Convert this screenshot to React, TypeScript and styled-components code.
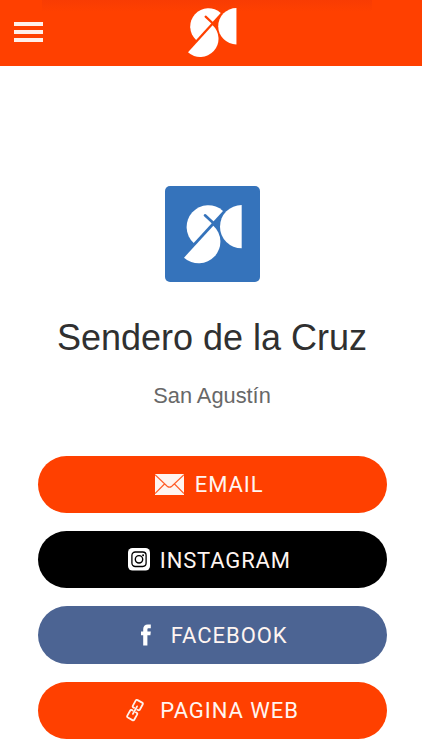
import React from "react";
import styled, { createGlobalStyle } from "styled-components";

const GlobalStyle = createGlobalStyle`
  * { box-sizing: border-box; }
  body { margin: 0; background: #fff; overflow: hidden; }
`;

const Page = styled.div`
  width: 422px;
  height: 750px;
  overflow: hidden;
  background: #fff;
  display: flex;
  flex-direction: column;
`;

const Header = styled.header`
  height: 66.4px;
  flex: none;
  display: grid;
  grid-template-columns: 188.4px 49px 1fr;
  align-items: start;
  background: linear-gradient(#f83c03, #ff4000 12px) 42px 0 / 330px 100% no-repeat #ff4000;
`;

const MenuButton = styled.button`
  margin: 22px 0 0 13.7px;
  padding: 0;
  width: 29px;
  height: 20px;
  border: 0;
  background: none;
  display: flex;
  flex-direction: column;
  justify-content: space-between;
`;

const MenuBar = styled.span`
  height: 3.7px;
  background: #fff0ea;
`;

const HeaderLogo = styled.div`
  padding-top: 8px;
  height: 60px;
`;

const Profile = styled.main`
  display: flex;
  flex-direction: column;
  align-items: center;
  padding-top: 119.6px;
`;

const Avatar = styled.div`
  width: 95.6px;
  height: 96px;
  margin-left: 3px;
  border-radius: 5px;
  background: #3573bb;
  padding: 19px 0 0 18.9px;
`;

const Title = styled.h1`
  margin: 34px 0 0 2px;
  font: 400 36px/44px "Liberation Sans", Arial, sans-serif;
  letter-spacing: 0;
  color: #303030;
  white-space: nowrap;
`;

const Subtitle = styled.p`
  margin: 23px 0 0 2px;
  font: 400 21.8px/26px "Liberation Sans", Arial, sans-serif;
  color: #686868;
  white-space: nowrap;
`;

const Links = styled.nav`
  margin: 46.7px 0 0 3px;
  width: 349.4px;
  display: flex;
  flex-direction: column;
  gap: 18.1px;
`;

const LinkButton = styled.a<{ $color: string; $inset: number }>`
  height: 57.3px;
  border-radius: 29px;
  background: ${(p) => p.$color};
  padding-left: ${(p) => p.$inset}px;
  display: flex;
  align-items: center;
  color: #fff;
`;

const IconSlot = styled.span<{ $width: number }>`
  width: ${(p) => p.$width}px;
  flex: none;
  display: flex;
  align-items: center;
`;

const Label = styled.span<{ $spacing: number }>`
  padding-top: 2px;
  font: 400 22px/26px Roboto, sans-serif;
  letter-spacing: ${(p) => p.$spacing}px;
  color: #fff5f1;
  white-space: nowrap;
`;

const Logo = ({ width, background }: { width: number; background: string }) => (
  <svg width={width} height={(width * 176) / 174} viewBox="70 75 174 176" display="block">
    <g fill="#fff">
      <path d="M187 93A65 65 0 1 0 99 189Z" />
      <path d="M158 137A65 65 0 1 1 70 233Z" />
      <path d="M243 75V205A65 65 0 0 1 243 75Z" />
    </g>
    <path d="M133 106L162 133" stroke={background} strokeWidth="8" strokeLinecap="round" />
  </svg>
);

const MailIcon = () => (
  <svg width="29" height="21" viewBox="0 0 29 21">
    <path d="M0 0H29V21H0Z" fill="#fff4f0" />
    <path d="M0 .7L12.2 12.2Q14.5 14.2 16.8 12.2L29 .7M0 19.6L9.5 10M29 19.6L19.5 10" fill="none" stroke="#ff5c28" strokeWidth="1.2" />
  </svg>
);

const InstagramIcon = () => (
  <svg width="22" height="23" viewBox="0 0 22 23">
    <rect width="22" height="22.5" rx="4.5" fill="#fff" />
    <rect x="3.9" y="4" width="14.2" height="14.5" rx="3.4" fill="none" stroke="#000" strokeWidth="1.3" />
    <circle cx="11" cy="11.3" r="3.7" fill="none" stroke="#000" strokeWidth="1.4" />
    <circle cx="15.1" cy="7.2" r=".95" fill="#000" />
  </svg>
);

const FacebookIcon = () => (
  <svg width="11" height="22" viewBox="0 0 11 22">
    <path d="M2.2 21.5V11.3H0V7.6H2.2V5.2C2.2 1.9 3.9.4 6.8.4H9.8V4.2H7.8C6.7 4.2 6.4 4.7 6.4 5.6V7.6H9.8L9.4 11.3H6.4V21.5Z" fill="#fff" />
  </svg>
);

const ChainIcon = () => (
  <svg width="18" height="23" viewBox="0 0 18 23">
    <g transform="translate(9 11.1) rotate(29)" fill="none" stroke="#fff0ea" strokeWidth="1.8" strokeLinejoin="round" strokeLinecap="round">
      <path d="M-1.9-1.5H-2.6Q-4-1.5-4-2.9V-8.6Q-4-10-2.6-10H2.6Q4-10 4-8.6V-2.9Q4-1.5 2.6-1.5H1.9" />
      <path d="M1.9 1.5H2.6Q4 1.5 4 2.9V8.6Q4 10 2.6 10H-2.6Q-4 10-4 8.6V2.9Q-4 1.5-2.6 1.5H-1.9" />
      <path d="M0-4.3V4.3" />
    </g>
  </svg>
);

const links = [
  { label: "EMAIL", color: "#ff4000", inset: 117.5, slot: 39.5, spacing: 0.9, icon: <MailIcon /> },
  { label: "INSTAGRAM", color: "#000", inset: 90, slot: 32, spacing: 0.85, icon: <InstagramIcon /> },
  { label: "FACEBOOK", color: "#4c6493", inset: 103, slot: 30, spacing: 0.95, icon: <FacebookIcon /> },
  { label: "PAGINA WEB", color: "#ff4000", inset: 88.5, slot: 34, spacing: 0.95, icon: <ChainIcon /> },
];

export default function App() {
  return (
    <Page>
      <GlobalStyle />
      <Header>
        <MenuButton aria-label="Menu">
          <MenuBar />
          <MenuBar />
          <MenuBar />
        </MenuButton>
        <HeaderLogo>
          <Logo width={48.7} background="#ff4000" />
        </HeaderLogo>
      </Header>
      <Profile>
        <Avatar>
          <Logo width={58} background="#3573bb" />
        </Avatar>
        <Title>Sendero de la Cruz</Title>
        <Subtitle>San Agustín</Subtitle>
        <Links>
          {links.map((l) => (
            <LinkButton key={l.label} $color={l.color} $inset={l.inset}>
              <IconSlot $width={l.slot}>{l.icon}</IconSlot>
              <Label $spacing={l.spacing}>{l.label}</Label>
            </LinkButton>
          ))}
        </Links>
      </Profile>
    </Page>
  );
}
